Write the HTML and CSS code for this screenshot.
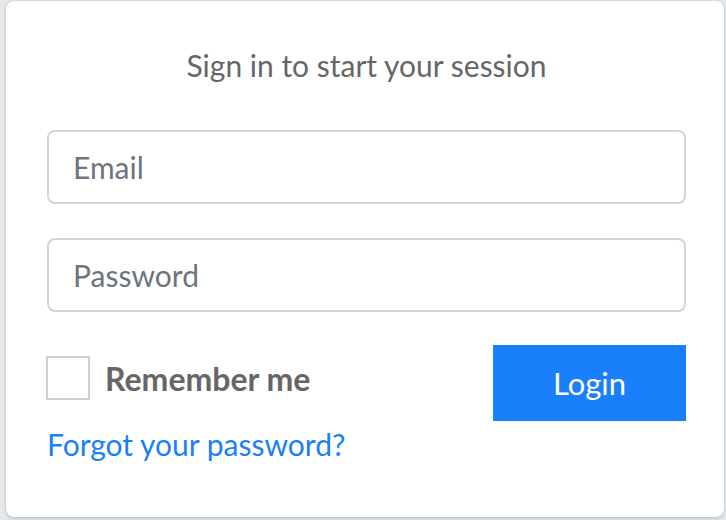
FILE: index.html
```html
<!DOCTYPE html>
<html lang="en">
<head>
<meta charset="utf-8">
<title>Sign in</title>
<link rel="stylesheet" href="styles.css">
</head>
<body>
<div class="card">
  <p class="msg">Sign in to start your session</p>
  <form class="form">
    <div class="field"><input class="input" type="email" placeholder="Email"></div>
    <div class="field"><input class="input" type="password" placeholder="Password"></div>
    <div class="row">
      <label class="remember"><span class="check"></span><span class="remember-text">Remember me</span></label>
      <button class="btn" type="button">Login</button>
    </div>
  </form>
  <a class="forgot" href="#">Forgot your password?</a>
</div>
</body>
</html>
```
FILE: styles.css
```css
html, body {
  margin: 0;
  padding: 0;
  height: 100%;
}
body {
  background: #e6e9ec;
  font-family: Lato, "Noto Sans", sans-serif;
  overflow: hidden;
}
.card {
  box-sizing: border-box;
  margin: 1px 0 0 6px;
  width: 718px;
  height: 516px;
  background: #fff;
  border-radius: 8px;
  box-shadow: 0 0 2px rgba(0,0,0,.18), 0 2px 4px rgba(0,0,0,.12);
  padding: 0 38px 0 41px;
  display: flex;
  flex-direction: column;
}
.msg {
  margin: 46px 0 0;
  text-align: center;
  color: #666;
  font-size: 30px;
  line-height: 36px;
}
.form {
  margin-top: 47px;
  display: flex;
  flex-direction: column;
}
.field { margin-bottom: 34px; }
.field:nth-child(2) { margin-bottom: 33px; }
.input {
  box-sizing: border-box;
  width: 100%;
  height: 74px;
  border: 2px solid #d1d6dc;
  border-radius: 8px;
  padding: 0 24px;
  font-family: inherit;
  font-size: 30px;
  color: #495057;
  background: #fff;
  outline: none;
}
.input::placeholder { color: #6c757d; opacity: 1; }
.row {
  display: flex;
  justify-content: space-between;
  align-items: flex-start;
}
.remember {
  display: flex;
  align-items: center;
  margin-top: 11px;
  margin-left: -1px;
}
.check {
  box-sizing: border-box;
  width: 44px;
  height: 44px;
  border: 2px solid #d3cfca;
  background: #fff;
}
.remember-text {
  margin-left: 15px;
  font-weight: 700;
  font-size: 32px;
  color: #666;
}
.btn {
  width: 193px;
  height: 76px;
  border: 0;
  border-radius: 0;
  background: #1a7ffb;
  color: #fff;
  font-family: inherit;
  font-size: 31px;
  padding: 0;
}
.forgot {
  margin-top: 5px;
  align-self: flex-start;
  color: #1a7ffb;
  text-decoration: none;
  font-size: 30px;
}
```
